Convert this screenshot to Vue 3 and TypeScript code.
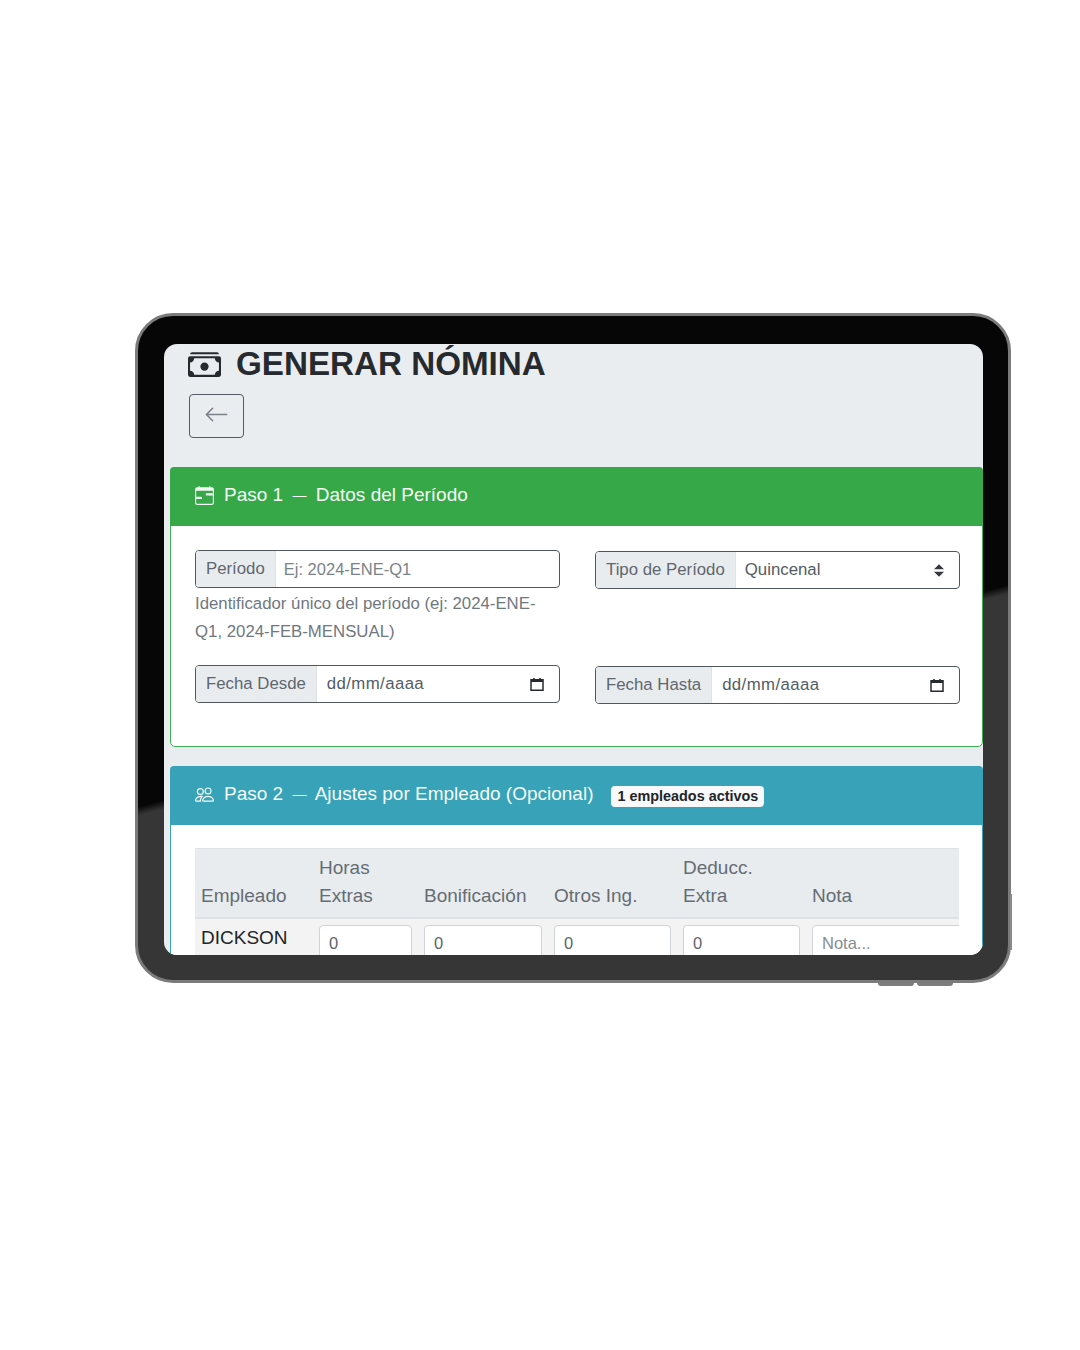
<script setup lang="ts">
const columns: { top?: string; bottom: string }[] = [
  { bottom: 'Empleado' },
  { top: 'Horas', bottom: 'Extras' },
  { bottom: 'Bonificación' },
  { bottom: 'Otros Ing.' },
  { top: 'Deducc.', bottom: 'Extra' },
  { bottom: 'Nota' },
]
const amounts: string[] = ['0', '0', '0', '0']
</script>

<template>
  <div class="page">
    <div class="device">
      <span class="btn-side"></span>
      <span class="btn-bottom one"></span>
      <span class="btn-bottom two"></span>
      <main class="screen">
        <h1 class="title">
          <svg class="title-icon" viewBox="0 0 16 16" fill="currentColor">
            <path d="M1 3a1 1 0 0 1 1-1h12a1 1 0 0 1 1 1H1zm7 8a2 2 0 1 0 0-4 2 2 0 0 0 0 4z" />
            <path d="M0 5a1 1 0 0 1 1-1h14a1 1 0 0 1 1 1v8a1 1 0 0 1-1 1H1a1 1 0 0 1-1-1V5zm3 0a2 2 0 0 1-2 2v4a2 2 0 0 1 2 2h10a2 2 0 0 1 2-2V7a2 2 0 0 1-2-2H3z" />
          </svg>
          <span>GENERAR NÓMINA</span>
        </h1>
        <button class="back" type="button" aria-label="Volver">
          <svg viewBox="0 0 16 16" fill="currentColor">
            <path d="M15 8a.5.5 0 0 0-.5-.5H2.707l3.147-3.146a.5.5 0 1 0-.708-.708l-4 4a.5.5 0 0 0 0 .708l4 4a.5.5 0 0 0 .708-.708L2.707 8.5H14.5A.5.5 0 0 0 15 8z" />
          </svg>
        </button>

        <section class="card green">
          <header class="card-head">
            <svg class="head-icon" viewBox="0 0 16 16" fill="currentColor">
              <path d="M9 7a1 1 0 0 1 1-1h5v2h-5a1 1 0 0 1-1-1zM1 9h4a1 1 0 0 1 0 2H1V9z" />
              <path d="M3.5 0a.5.5 0 0 1 .5.5V1h8V.5a.5.5 0 0 1 1 0V1h1a2 2 0 0 1 2 2v11a2 2 0 0 1-2 2H2a2 2 0 0 1-2-2V3a2 2 0 0 1 2-2h1V.5a.5.5 0 0 1 .5-.5zM1 4v10a1 1 0 0 0 1 1h12a1 1 0 0 0 1-1V4H1z" />
            </svg>
            <span>Paso 1 <span class="dash">—</span> Datos del Período</span>
          </header>
          <div class="form-grid">
            <div>
              <div class="group">
                <label class="addon">Período</label>
                <input class="field" placeholder="Ej: 2024-ENE-Q1" />
              </div>
              <p class="help">Identificador único del período (ej: 2024-ENE-Q1, 2024-FEB-MENSUAL)</p>
            </div>
            <div class="col-right">
              <div class="group">
                <label class="addon">Tipo de Período</label>
                <div class="value">
                  <span>Quincenal</span>
                  <svg class="updown" viewBox="0 0 4 5" fill="#343a40"><path d="M2 0L0 2h4zm0 5L0 3h4z" /></svg>
                </div>
              </div>
            </div>
            <div>
              <div class="group">
                <label class="addon">Fecha Desde</label>
                <div class="value date">
                  <span>dd/mm/aaaa</span>
                  <svg class="cal" viewBox="0 0 14 14"><path d="M1 3.6h12M1 2.2h12v10.6H1z" fill="none" stroke="#26292c" stroke-width="1.5" /><path d="M1 1.6h12v3H1zM3.2.4h1.6v2H3.2zM9.2.4h1.6v2H9.2z" fill="#26292c" /></svg>
                </div>
              </div>
            </div>
            <div class="col-right">
              <div class="group">
                <label class="addon">Fecha Hasta</label>
                <div class="value date">
                  <span>dd/mm/aaaa</span>
                  <svg class="cal" viewBox="0 0 14 14"><path d="M1 3.6h12M1 2.2h12v10.6H1z" fill="none" stroke="#26292c" stroke-width="1.5" /><path d="M1 1.6h12v3H1zM3.2.4h1.6v2H3.2zM9.2.4h1.6v2H9.2z" fill="#26292c" /></svg>
                </div>
              </div>
            </div>
          </div>
        </section>

        <section class="card teal">
          <header class="card-head">
            <svg class="head-icon" viewBox="0 0 16 16" fill="currentColor">
              <path d="M15 14s1 0 1-1-1-4-5-4-5 3-5 4 1 1 1 1h8Zm-7.978-1A.261.261 0 0 1 7 12.996c.001-.264.167-1.03.76-1.72C8.312 10.629 9.282 10 11 10c1.717 0 2.687.63 3.24 1.276.593.69.758 1.457.76 1.72l-.008.002a.274.274 0 0 1-.014.002H7.022ZM11 7a2 2 0 1 0 0-4 2 2 0 0 0 0 4Zm3-2a3 3 0 1 1-6 0 3 3 0 0 1 6 0ZM6.936 9.28a5.88 5.88 0 0 0-1.23-.247A7.35 7.35 0 0 0 5 9c-4 0-5 3-5 4 0 .667.333 1 1 1h4.216A2.238 2.238 0 0 1 5 13c0-1.01.377-2.042 1.09-2.904.243-.294.526-.569.846-.816ZM4.92 10A5.493 5.493 0 0 0 4 13H1c0-.26.164-1.03.76-1.724.545-.636 1.492-1.256 3.16-1.275ZM1.5 5.5a3 3 0 1 1 6 0 3 3 0 0 1-6 0Zm3-2a2 2 0 1 0 0 4 2 2 0 0 0 0-4Z" />
            </svg>
            <span>Paso 2 <span class="dash">—</span> Ajustes por Empleado (Opcional)</span>
            <span class="badge">1 empleados activos</span>
          </header>
          <div class="table-wrap">
            <table>
              <colgroup>
                <col class="c1" />
                <col class="c2" />
                <col class="c3" />
                <col class="c4" />
                <col class="c4" />
                <col class="c6" />
              </colgroup>
              <thead>
                <tr>
                  <th v-for="c in columns" :key="c.bottom">
                    <template v-if="c.top">{{ c.top }}<br /></template>{{ c.bottom }}
                  </th>
                </tr>
              </thead>
              <tbody>
                <tr>
                  <td class="name">DICKSON</td>
                  <td v-for="(a, i) in amounts" :key="i"><input class="cell" :value="a" /></td>
                  <td><input class="cell" placeholder="Nota..." /></td>
                </tr>
              </tbody>
            </table>
          </div>
        </section>
      </main>
    </div>
  </div>
</template>

<style>
html, body { background: #fff; }
</style>

<style scoped>
* { box-sizing: border-box; }
.page {
  width: 1080px;
  height: 1350px;
  padding: 313px 0 0 135px;
  background: #fff;
  font-family: "Liberation Sans", Arial, sans-serif;
  overflow: hidden;
}
.device {
  position: relative;
  width: 876px;
  height: 670px;
  padding: 28px 25px 25px 26px;
  border: 3px solid #7b7b7b;
  border-radius: 38px;
  background: linear-gradient(165.7deg, #060606 55.4%, #363636 56.4%);
}
.btn-side {
  position: absolute;
  right: -4px;
  top: 578px;
  width: 2px;
  height: 56px;
  background: #8a8a8a;
}
.btn-bottom {
  position: absolute;
  bottom: -6px;
  width: 36px;
  height: 3px;
  border-radius: 0 0 3px 3px;
  background: #7d7d7d;
}
.btn-bottom.one { left: 740px; }
.btn-bottom.two { left: 779px; }
.screen {
  width: 819px;
  height: 611px;
  padding-left: 6px;
  border-radius: 13px;
  background: #e9edf0;
  overflow: hidden;
}
.title {
  display: flex;
  align-items: center;
  gap: 15px;
  height: 40px;
  margin: 0 0 10px 18px;
  color: #262a2e;
  font-size: 33.2px;
  font-weight: 700;
  line-height: 40px;
  white-space: nowrap;
}
.title-icon { width: 33px; height: 33px; flex: none; }
.back {
  display: flex;
  align-items: center;
  justify-content: center;
  width: 55px;
  height: 44px;
  margin: 0 0 29px 19px;
  padding: 0 0 3px;
  border: 1px solid #555b61;
  border-radius: 4px;
  background: transparent;
  color: #7b838a;
}
.back svg { width: 25px; height: 25px; }
.card {
  width: 813px;
  margin-bottom: 19px;
  border: 1px solid;
  border-radius: 5px;
  background: #fff;
}
.card.green { border-color: #3fb255; }
.card.teal { border-color: #37a2b8; }
.card-head {
  display: flex;
  align-items: center;
  height: 59px;
  margin: -1px -1px 0;
  padding: 0 0 3px 24px;
  border-radius: 4px 4px 0 0;
  color: #f4fbf6;
  font-size: 19px;
  white-space: nowrap;
}
.green .card-head { background: #36a847; }
.teal .card-head { background: #37a2b8; }
.head-icon { width: 19px; height: 19px; margin: 0 10px 0 1px; flex: none; }
.green .head-icon { margin-right: 10px; }
.dash { margin: 0 4px; font-size: 14px; vertical-align: 1px; }
.badge {
  margin: 5px 0 0 18px;
  padding: 0 6px;
  height: 21px;
  border-radius: 4px;
  background: #f8f9fa;
  color: #212529;
  font-size: 14.4px;
  font-weight: 700;
  line-height: 21px;
}
.form-grid {
  display: grid;
  grid-template-columns: 365px 365px;
  column-gap: 35px;
  row-gap: 19px;
  padding: 24px 24px 42px;
}
.col-right { padding-top: 1px; }
.group {
  display: flex;
  height: 38px;
  border: 1px solid #50565c;
  border-radius: 4px;
  overflow: hidden;
  background: #fff;
  font-size: 16.8px;
}
.addon {
  display: flex;
  align-items: center;
  padding: 0 10px;
  border-right: 1px solid #dee2e6;
  background: #e9ecef;
  color: #5f676e;
  white-space: nowrap;
}
.field {
  flex: 1;
  min-width: 0;
  padding: 0 8px;
  border: 0;
  outline: 0;
  font: inherit;
  font-size: 16.5px;
  background: transparent;
}
.field::placeholder { color: #7b8289; opacity: 1; }
.value {
  display: flex;
  flex: 1;
  align-items: center;
  justify-content: space-between;
  padding: 0 15px 0 9px;
  color: #545c63;
}
.date { padding: 0 15px 0 10px; letter-spacing: 0.4px; }
.updown { width: 10px; height: 13px; }
.cal { width: 14px; height: 15px; }
.help {
  margin: 2px 0 0;
  color: #70787f;
  font-size: 16.8px;
  line-height: 28px;
}
.table-wrap {
  margin: 23px 23px 0 24px;
  overflow: hidden;
}
table {
  width: 781px;
  table-layout: fixed;
  border-collapse: collapse;
  color: #212529;
  font-size: 19px;
  line-height: 28px;
}
.c1 { width: 118px; }
.c2 { width: 105px; }
.c3 { width: 130px; }
.c4 { width: 129px; }
.c6 { width: 170px; }
th {
  padding: 5px 6px 7px;
  border-top: 1px solid #dee2e6;
  border-bottom: 2px solid #dee2e6;
  background: #e9ecef;
  color: #656c73;
  font-weight: 400;
  text-align: left;
  vertical-align: bottom;
}
td {
  padding: 6px;
  background: #f3f3f3;
  vertical-align: top;
}
.name { padding-top: 5px; }
.cell {
  display: block;
  width: 100%;
  height: 36px;
  padding: 0 9px;
  border: 1px solid #ced4da;
  border-radius: 4px;
  outline: 0;
  background: #fff;
  color: #5d656c;
  font: inherit;
  font-size: 16.5px;
}
.cell::placeholder { color: #868d94; opacity: 1; }
</style>
